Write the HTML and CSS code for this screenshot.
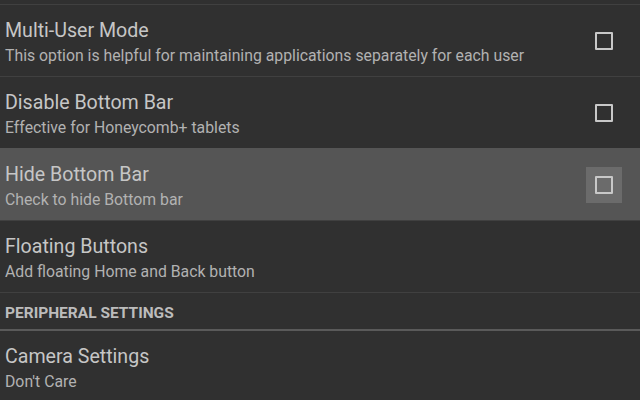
FILE: index.html
```html
<!DOCTYPE html>
<html lang="en">
<head>
    <meta charset="UTF-8">
    <meta name="viewport" content="width=device-width, initial-scale=1.0">
    <title>Settings</title>
    <link rel="stylesheet" href="styles.css">
</head>
<body>
    <div class="screen">
        <div class="pref">
            <div class="pref-text">
                <div class="pref-title">Multi-User Mode</div>
                <div class="pref-summary">This option is helpful for maintaining applications separately for each user</div>
            </div>
            <div class="check-wrap"><span class="check"></span></div>
        </div>
        <div class="pref">
            <div class="pref-text">
                <div class="pref-title">Disable Bottom Bar</div>
                <div class="pref-summary">Effective for Honeycomb+ tablets</div>
            </div>
            <div class="check-wrap"><span class="check"></span></div>
        </div>
        <div class="pref pressed">
            <div class="pref-text">
                <div class="pref-title">Hide Bottom Bar</div>
                <div class="pref-summary">Check to hide Bottom bar</div>
            </div>
            <div class="check-wrap"><span class="check"></span></div>
        </div>
        <div class="pref">
            <div class="pref-text">
                <div class="pref-title">Floating Buttons</div>
                <div class="pref-summary">Add floating Home and Back button</div>
            </div>
        </div>
        <div class="category">PERIPHERAL SETTINGS</div>
        <div class="pref first">
            <div class="pref-text">
                <div class="pref-title">Camera Settings</div>
                <div class="pref-summary">Don't Care</div>
            </div>
        </div>
    </div>
</body>
</html>
```

FILE: styles.css
```css
body {
    margin: 0;
    padding: 0;
    background-color: #303030;
    font-family: Roboto, 'Noto Sans', sans-serif;
}
.screen {
    width: 640px;
    height: 400px;
    overflow: hidden;
    padding-top: 4px;
    box-sizing: border-box;
}
.pref {
    display: flex;
    align-items: center;
    height: 71px;
    border-top: 1px solid #404040;
    padding-left: 5px;
}
.pref.first {
    border-top: none;
}
.pref.pressed {
    background: #555555;
    border-top-color: #555555;
}
.pref-text {
    flex: 1;
    align-self: flex-start;
    padding-top: 14px;
}
.pref-title {
    color: #c6c6c6;
    font-size: 19.6px;
    line-height: 24px;
}
.pref-summary {
    color: #b2b2b2;
    font-size: 15.8px;
    line-height: 20px;
    margin-top: 3px;
}
.check-wrap {
    width: 36px;
    height: 36px;
    margin-right: 18px;
    display: flex;
    align-items: center;
    justify-content: center;
}
.pressed .check-wrap {
    background: #6b6b6b;
}
.check {
    width: 14px;
    height: 14px;
    border: 2px solid #c8c8c8;
    border-radius: 1px;
}
.category {
    color: #bcbcbc;
    font-size: 15.5px;
    font-weight: bold;
    line-height: 20px;
    padding: 10px 0 6px 5px;
    border-top: 1px solid #404040;
    border-bottom: 2px solid #5a5a5a;
}
```
